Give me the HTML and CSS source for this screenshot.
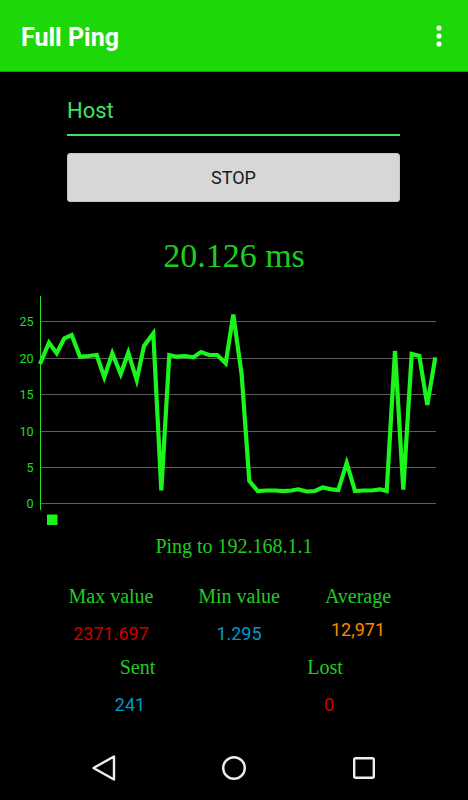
FILE: index.html
```html
<!DOCTYPE html>
<html lang="en">
<head>
  <meta charset="UTF-8">
  <meta name="viewport" content="width=device-width, initial-scale=1.0">
  <title>Full Ping</title>
  <link rel="stylesheet" href="styles.css">
</head>
<body>
  <header class="appbar">
    <h1 class="title">Full Ping</h1>
    <svg class="menu" width="6" height="22" viewBox="0 0 6 22">
      <circle cx="3" cy="3" r="2.6" fill="#fff"/>
      <circle cx="3" cy="11" r="2.6" fill="#fff"/>
      <circle cx="3" cy="19" r="2.6" fill="#fff"/>
    </svg>
  </header>

  <main class="content">
    <div class="host">Host</div>
    <button class="stop">STOP</button>

    <div class="latency">20.126 ms</div>

    <!-- ping chart -->
    <svg class="chart" width="468" height="240" viewBox="0 0 468 240">
      <g stroke="#5c5c5c" stroke-width="1.2">
        <line x1="40" y1="31.5" x2="436" y2="31.5"/>
        <line x1="40" y1="68.5" x2="436" y2="68.5"/>
        <line x1="40" y1="104.5" x2="436" y2="104.5"/>
        <line x1="40" y1="141.5" x2="436" y2="141.5"/>
        <line x1="40" y1="177.5" x2="436" y2="177.5"/>
        <line x1="40" y1="213.5" x2="436" y2="213.5"/>
      </g>
      <line x1="40.5" y1="6" x2="40.5" y2="220" stroke="#22e022" stroke-width="1"/>
      <g class="axis-labels" text-anchor="end">
        <text x="33.5" y="36">25</text>
        <text x="33.5" y="73">20</text>
        <text x="33.5" y="109">15</text>
        <text x="33.5" y="146">10</text>
        <text x="33.5" y="182">5</text>
        <text x="33.5" y="218">0</text>
      </g>
      <polyline fill="none" stroke="#1cf51c" stroke-width="4.2" points="40,74 49,52.7 56.7,63.3 64.3,48.3 71.7,45 80,66.7 88.3,66 96.7,65 104.3,87.3 112.3,63.3 120.7,84 128.3,62.7 136.7,90 144,56 153.3,43.5 161.3,200.5 169.3,65 176.7,66.7 185,66 193.3,67.3 201,62 209,65 217.3,65 225.7,73.3 233.3,24.5 241.7,85 249.3,191 257.7,201 266.7,200.5 275,200.5 283.3,201.2 291.7,200.5 298.3,199.3 306.7,201.5 315,201 322.7,197.5 331.7,199.3 338.3,200 346.7,173 355,201 363.3,200.5 371.7,200.5 380,199.3 386.7,201 395,61 403.3,199.5 411.7,64 419.3,66 427.3,115 435.3,67.3"/>
      <rect x="47" y="224.5" width="10.5" height="10.5" fill="#1cf51c"/>
    </svg>

    <div class="target">Ping to 192.168.1.1</div>

    <div class="stats">
      <div class="label">Max value</div>
      <div class="label">Min value</div>
      <div class="label">Average</div>
      <div class="value red">2371.697</div>
      <div class="value blue">1.295</div>
      <div class="value orange raised">12,971</div>
    </div>

    <div class="counts">
      <div class="label sent">Sent</div>
      <div class="label lost">Lost</div>
      <div class="value blue sent-value">241</div>
      <div class="value red lost-value">0</div>
    </div>
  </main>

  <nav class="navbar">
    <div class="nav-slot">
      <svg width="26" height="28" viewBox="0 0 26 28">
        <polygon points="2.5,14 23,2.5 23,25.5" fill="none" stroke="#eee" stroke-width="2.4" stroke-linejoin="round"/>
      </svg>
    </div>
    <div class="nav-slot">
      <svg width="26" height="26" viewBox="0 0 26 26">
        <circle cx="13" cy="13" r="10.8" fill="none" stroke="#eee" stroke-width="2.4"/>
      </svg>
    </div>
    <div class="nav-slot">
      <svg width="24" height="24" viewBox="0 0 24 24">
        <rect x="2.2" y="2.2" width="19.6" height="19.6" rx="1.5" fill="none" stroke="#eee" stroke-width="2.4"/>
      </svg>
    </div>
  </nav>
</body>
</html>
```

FILE: styles.css
```css
body {
  margin: 0;
  width: 468px;
  height: 800px;
  background: #000;
  font-family: Roboto, "Liberation Sans", sans-serif;
  display: flex;
  flex-direction: column;
  overflow: hidden;
}

.appbar {
  height: 71px;
  flex-shrink: 0;
  background: #1dd808;
  border-bottom: 1px solid #139c05;
  display: flex;
  align-items: center;
  justify-content: space-between;
}

.title {
  margin: 0 0 0 21px;
  padding-top: 4px;
  font-size: 25px;
  line-height: 28px;
  font-weight: 700;
  color: #fff;
}

.menu {
  margin-right: 26px;
}

.content {
  flex: 1;
  display: flex;
  flex-direction: column;
}

.host {
  margin: 26px 68px 0 67px;
  padding-bottom: 10px;
  border-bottom: 2px solid #40e060;
  font-size: 22px;
  line-height: 26px;
  color: #40e060;
}

.stop {
  margin: 17px 68px 0 67px;
  height: 49px;
  border: 1px solid #c4c5c4;
  border-radius: 3px;
  background: #d6d7d6;
  box-shadow: 0 1px 1px rgba(0, 0, 0, 0.4);
  font-family: Roboto, sans-serif;
  font-size: 18px;
  color: #1a1a1a;
  padding: 0;
}

.latency {
  margin-top: 34px;
  font-family: "Liberation Serif", serif;
  font-size: 34px;
  line-height: 40px;
  text-align: center;
  color: #20cc20;
}

.chart {
  display: block;
  margin-top: 14px;
}

.axis-labels {
  font-family: Roboto, sans-serif;
  font-size: 12.5px;
  fill: #22dd22;
}

.target {
  margin-top: 4px;
  font-family: "Liberation Serif", serif;
  font-size: 20px;
  line-height: 24px;
  text-align: center;
  color: #20cc20;
}

.label {
  font-family: "Liberation Serif", serif;
  font-size: 20px;
  line-height: 24px;
  color: #20cc20;
}

.value {
  font-size: 18px;
  line-height: 22px;
}

.red {
  color: #cc0000;
}

.blue {
  color: #0099cc;
}

.orange {
  color: #ff8800;
}

.stats {
  margin: 26px 0 0 47px;
  display: grid;
  grid-template-columns: 128px 128px 110px;
  justify-items: center;
  align-items: start;
  row-gap: 15px;
}

.raised {
  margin-top: -4px;
}

.counts {
  margin: 10px 0 0 47px;
  display: grid;
  grid-template-columns: 188px 188px;
  justify-items: center;
  row-gap: 15px;
}

.sent {
  margin-right: 7px;
}

.lost {
  margin-right: 8px;
}

.sent-value {
  margin-right: 22px;
}

.navbar {
  height: 48px;
  margin-bottom: 8px;
  flex-shrink: 0;
  display: flex;
  justify-content: center;
  align-items: center;
}

.nav-slot {
  width: 130px;
  display: flex;
  justify-content: center;
}
```
